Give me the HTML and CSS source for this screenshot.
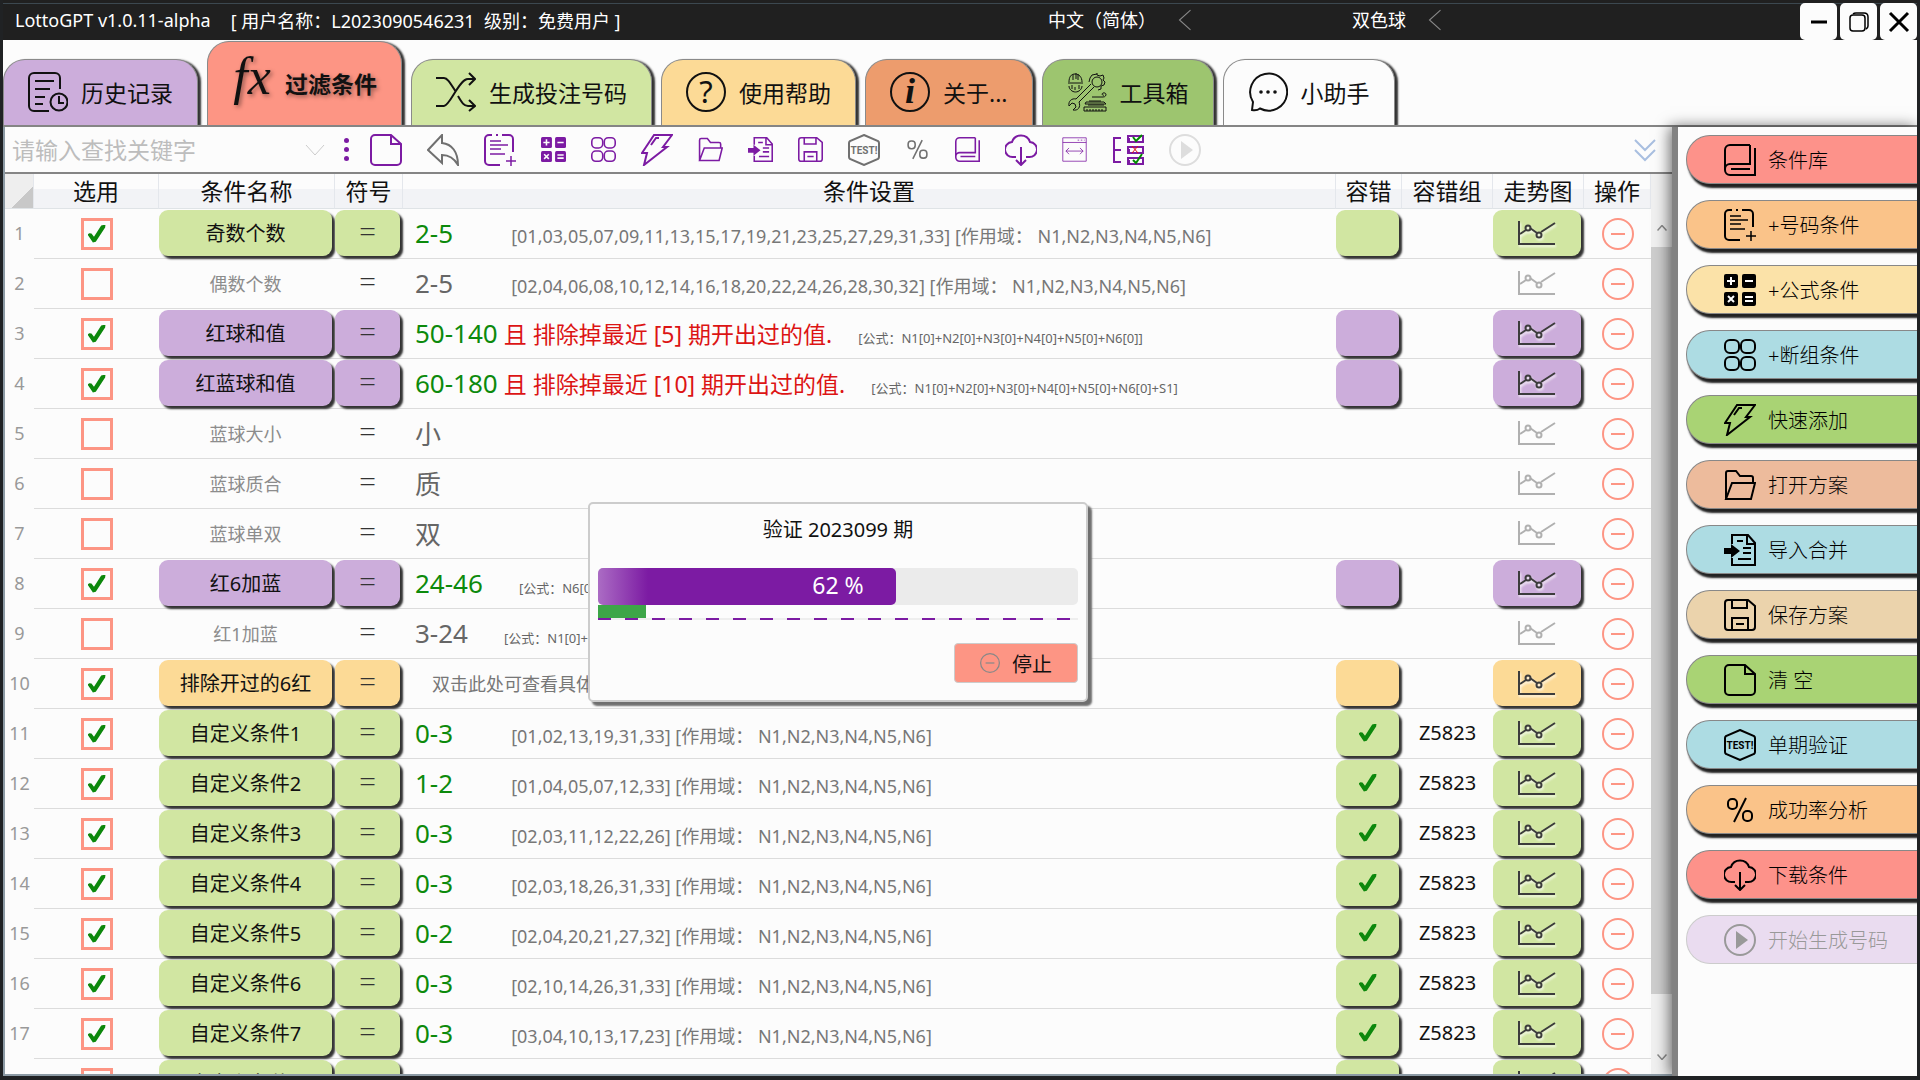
FILE: index.html
```
<!DOCTYPE html>
<html lang="zh-CN">

<head>
    <meta charset="UTF-8">
    <meta name="viewport" content="width=device-width, initial-scale=1.0">
    <title>LottoGPT</title>
    <link rel="stylesheet" href="styles.css">
</head>

<body>
    <svg class="sprite" aria-hidden="true">
        <symbol id="i-history" viewBox="0 0 40 40">
            <path d="M32 17V6a5 5 0 0 0-5-5H6a5 5 0 0 0-5 5v28a5 5 0 0 0 5 5h15M7 9h19M7 17h15M7 25h10M7 32h8" />
            <circle cx="31" cy="30" r="8.500" />
            <path d="M31 24v7h5" />
        </symbol>
        <symbol id="i-shuffle" viewBox="0 0 40 40">
            <path d="M0 6h8c3 0 5 3 12 14M0 34h8c6 0 15-27 24-27h6M22 24c4 7 6 10 10 10h6M33 1l6 6-6 6M33 28l6 6-6 5" />
        </symbol>
        <symbol id="i-chat" viewBox="0 0 40 40">
            <path d="M4 38l1-8A18.500 18.500 0 1 1 12 36.500C10 38 7 38.500 4 38z" />
            <g fill="currentColor" stroke="none"><circle cx="13" cy="20" r="1.800" /><circle cx="20" cy="20" r="1.800" /><circle cx="27" cy="20" r="1.800" /></g>
        </symbol>
        <symbol id="i-tools" viewBox="0 0 40 40">
            <path d="M1 11h15M2 10c0-5 2-8 6-8s7 3 7 8M6 8V2M9 7V1M11 8V2M2 14c0 3 3 6 6.500 6s6.500-3 6.500-6M5 13v4M12 13v4M8 15v3" />
            <circle cx="30" cy="10" r="5" />
            <path d="M30 1v2l3 1 3-1 1 3-1 2 2 2-1 3-3 1v3l-3 1M30 2l-5 1-2 3-1 4M27 15l-15 15M24 12L9 27M9 27c-4-1-8 2-7 7l3-3 3 1 1 3-3 3c5 1 8-3 6-8M25 25h11c4 0 4-5 0-4-2 1 0 3 1 2M19 30h18l2 2H18zM22 29h12M21 33h16M17 35h22v4H17zM20 39v-2M23 39v-2M26 39v-2M29 39v-2M32 39v-2M35 39v-2" />
        </symbol>
        <symbol id="i-doc" viewBox="0 0 32 32">
            <path d="M21 1H5a4 4 0 0 0-4 4v22a4 4 0 0 0 4 4h22a4 4 0 0 0 4-4V10zM21 1v9h10" />
        </symbol>
        <symbol id="i-back" viewBox="0 0 32 32">
            <path d="M15 1v8c10 1 16 9 16 22-4-7-9-10-16-10v8L1 16z" />
        </symbol>
        <symbol id="i-list" viewBox="0 0 32 32">
            <path d="M8 1H5a4 4 0 0 0-4 4v22a4 4 0 0 0 4 4h11M12 1h2M18 1h7a4 4 0 0 1 4 4v13" />
            <path d="M6 7h11M6 11h18M6 15h11M6 20h15M27 22v10M22 27h10" stroke-width="1.500" />
        </symbol>
        <symbol id="i-calc" viewBox="0 0 32 32">
            <g fill="currentColor" stroke="none">
                <rect width="14" height="14" rx="2" /><rect x="18" width="14" height="14" rx="2" />
                <rect y="18" width="14" height="14" rx="2" /><rect x="18" y="18" width="14" height="14" rx="2" />
            </g>
            <path class="hole" d="M7 3v8M3 7h8M21 7h8M4 22l6 6M10 22l-6 6M21 23h8M21 27h8" />
        </symbol>
        <symbol id="i-four" viewBox="0 0 32 32">
            <rect x="1" y="1" width="14" height="13" rx="5" /><rect x="17" y="1" width="14" height="13" rx="5" />
            <rect x="1" y="18" width="14" height="13" rx="5" /><rect x="17" y="18" width="14" height="13" rx="5" />
        </symbol>
        <symbol id="i-bolt" viewBox="0 0 32 32">
            <path d="M13 1h18L22 13h4L3 31l3-12H1zM10 11l5-7h3" />
        </symbol>
        <symbol id="i-folder" viewBox="0 0 32 32">
            <path d="M2 30V4a2 2 0 0 1 2-2h8l4 5h11a2 2 0 0 1 2 2v5M2 30l6-16h23l-4 16z" />
        </symbol>
        <symbol id="i-import" viewBox="0 0 32 32">
            <path d="M8 10V1h16l7 8v22H8v-7M23 1v9h8M13 7h6M19 14h8M19 19h8M14 25h13" />
            <path d="M0 14h7v-4l9 7-9 7v-4H0z" fill="currentColor" stroke="none" />
        </symbol>
        <symbol id="i-save" viewBox="0 0 32 32">
            <path d="M1 4a3 3 0 0 1 3-3h20l7 6v21a3 3 0 0 1-3 3H4a3 3 0 0 1-3-3zM8 1v8h15V1M8 31V19h16v12M12 25h8" />
        </symbol>
        <symbol id="i-test" viewBox="0 0 32 32">
            <path d="M16 1l14 6q1 1 1 2v14q0 1-1 2l-14 6-14-6q-1-1-1-2V9q0-1 1-2z" />
            <text x="16" y="20" text-anchor="middle" class="test-text">TEST!</text>
        </symbol>
        <symbol id="i-percent" viewBox="0 0 32 32">
            <rect x="4" y="5" width="9" height="10" rx="4" /><rect x="19" y="17" width="9" height="10" rx="4" />
            <path d="M22 4L10 28" />
        </symbol>
        <symbol id="i-book" viewBox="0 0 32 32">
            <path d="M26 1H6a5 5 0 0 0-5 5v20a5 5 0 0 0 5 5h25V4M26 1v19H6a5 5 0 0 0-5 5M7 25h19" />
        </symbol>
        <symbol id="i-cloud" viewBox="0 0 32 32">
            <path d="M11 23H8A7.500 7.500 0 0 1 7 8a9.500 9.500 0 0 1 18 0 7.500 7.500 0 0 1-1 15h-3M16 13v18M11 26l5 5 5-5" />
        </symbol>
        <symbol id="i-window" viewBox="0 0 32 32">
            <path d="M1 1h30v30H1zM1 7h30M20 4h2M24 4h2M28 4h1M5 18h22M9 14l-4 4 4 4M23 14l4 4-4 4" />
        </symbol>
        <symbol id="i-tree" viewBox="0 0 32 32">
            <path d="M9 4H2v24h7M2 16h7M16 2h15v6H16zM16 13h15v6H16zM16 24h15v6H16zM17 4v3M17 15v3M17 26v3" />
            <path d="M21 3l3 4 6-6M21 26l3 3 6-9" stroke="#008a00" />
            <path d="M20 12l6 7M26 12l-6 7" stroke="#e01010" stroke-width="1" />
        </symbol>
        <symbol id="i-play" viewBox="0 0 32 32">
            <circle cx="16" cy="16" r="15" />
            <path d="M12 7v18l12-9z" fill="currentColor" stroke="none" />
        </symbol>
        <symbol id="i-minus" viewBox="0 0 32 32">
            <circle cx="16" cy="16" r="15" />
            <path d="M9 16h14" />
        </symbol>
        <symbol id="i-trend" viewBox="0 0 40 26">
            <path d="M2 1v23h36M3 14l6-4M13 8l7 5M24 12L38 3" />
            <circle cx="11" cy="8" r="2.500" /><circle cx="22" cy="15" r="2.500" />
        </symbol>
        <symbol id="i-left" viewBox="0 0 12 20"><path d="M11 1L1 10l10 9" /></symbol>
        <symbol id="i-down" viewBox="0 0 20 12"><path d="M1 1l9 10 9-10" /></symbol>
    </svg>

    <header class="titlebar">
        <span class="app-name">LottoGPT v1.0.11-alpha</span>
        <span class="user">[ 用户名称：L2023090546231&nbsp; 级别：免费用户 ]</span>
        <div class="pickers">
            <div class="picker">
                <select aria-label="语言"><option>中文（简体）</option></select>
                <svg class="left"><use href="#i-left" /></svg>
            </div>
            <div class="picker">
                <select aria-label="彩种"><option>双色球</option></select>
                <svg class="left"><use href="#i-left" /></svg>
            </div>
        </div>
        <div class="win-buttons">
            <button aria-label="最小化"><svg viewBox="0 0 20 20"><path d="M2 10h16" stroke-width="3" /></svg></button>
            <button aria-label="还原"><svg viewBox="0 0 20 20"><rect x="1" y="3" width="15" height="16" rx="3" /><path d="M4 2q1-1 3-1h8q4 0 4 4v9q0 2-2 3" /></svg></button>
            <button aria-label="关闭"><svg viewBox="0 0 20 20"><path d="M1 1l18 18M19 1L1 19" stroke-width="3" /></svg></button>
        </div>
    </header>

    <nav class="tabs">
        <button class="tab purple"><svg><use href="#i-history" /></svg>历史记录</button>
        <button class="tab red active"><svg viewBox="0 0 40 40"><text x="20" y="31" text-anchor="middle" class="fx">fx</text></svg>过滤条件</button>
        <button class="tab green"><svg><use href="#i-shuffle" /></svg>生成投注号码</button>
        <button class="tab yellow"><svg viewBox="0 0 40 40"><circle cx="20" cy="20" r="19" /><text x="20" y="31" text-anchor="middle" class="mark">?</text></svg>使用帮助</button>
        <button class="tab orange"><svg viewBox="0 0 40 40"><circle cx="20" cy="20" r="19" /><text x="20" y="31" text-anchor="middle" class="info">i</text></svg>关于...</button>
        <button class="tab grass"><svg class="thin"><use href="#i-tools" /></svg>工具箱</button>
        <button class="tab"><svg><use href="#i-chat" /></svg>小助手</button>
    </nav>

    <div class="content">
        <main class="main">
            <div class="toolbar">
                <div class="search">
                    <input type="text" placeholder="请输入查找关键字" aria-label="查找关键字">
                    <button aria-label="展开"><svg class="down"><use href="#i-down" /></svg></button>
                </div>
                <div class="dots"><i></i><i></i><i></i></div>
                <div class="tools">
                    <button class="big" aria-label="清空"><svg><use href="#i-doc" /></svg></button>
                    <button class="big gray" aria-label="撤销"><svg><use href="#i-back" /></svg></button>
                    <button class="big" aria-label="号码条件"><svg><use href="#i-list" /></svg></button>
                    <button aria-label="公式条件"><svg><use href="#i-calc" /></svg></button>
                    <button aria-label="断组条件"><svg><use href="#i-four" /></svg></button>
                    <button class="big" aria-label="快速添加"><svg><use href="#i-bolt" /></svg></button>
                    <button aria-label="打开方案"><svg><use href="#i-folder" /></svg></button>
                    <button aria-label="导入合并"><svg><use href="#i-import" /></svg></button>
                    <button aria-label="保存方案"><svg><use href="#i-save" /></svg></button>
                    <button class="big gray" aria-label="单期验证"><svg><use href="#i-test" /></svg></button>
                    <button class="gray" aria-label="成功率分析"><svg><use href="#i-percent" /></svg></button>
                    <button aria-label="条件库"><svg><use href="#i-book" /></svg></button>
                    <button class="big" aria-label="下载条件"><svg><use href="#i-cloud" /></svg></button>
                    <button class="fine" aria-label="列宽"><svg><use href="#i-window" /></svg></button>
                    <button class="big" aria-label="选择"><svg><use href="#i-tree" /></svg></button>
                    <button class="big" aria-label="开始" disabled><svg><use href="#i-play" /></svg></button>
                </div>
                <button class="more" aria-label="更多"><svg viewBox="0 0 22 22"><path d="M1 1l10 10L21 1M1 11l10 10 10-10" /></svg></button>
            </div>

            <div class="grid">
                <table>
                    <colgroup>
                        <col class="c-no"><col class="c-use"><col class="c-name"><col class="c-sign"><col>
                        <col class="c-tol"><col class="c-group"><col class="c-trend"><col class="c-op">
                    </colgroup>
                    <thead>
                        <tr>
                            <th class="corner"></th>
                            <th>选用</th>
                            <th>条件名称</th>
                            <th>符号</th>
                            <th>条件设置</th>
                            <th>容错</th>
                            <th>容错组</th>
                            <th>走势图</th>
                            <th>操作</th>
                        </tr>
                    </thead>
                    <tbody id="rows"></tbody>
                </table>
                <div class="scrollbar">
                    <svg class="arrow up"><use href="#i-down" /></svg>
                    <div class="thumb"></div>
                    <svg class="arrow"><use href="#i-down" /></svg>
                </div>
            </div>
        </main>

        <aside class="side">
            <button class="pink"><svg><use href="#i-book" /></svg>条件库</button>
            <button class="apricot"><svg><use href="#i-list" /></svg>+号码条件</button>
            <button class="cream"><svg><use href="#i-calc" /></svg>+公式条件</button>
            <button class="blue"><svg><use href="#i-four" /></svg>+断组条件</button>
            <button class="lime"><svg><use href="#i-bolt" /></svg>快速添加</button>
            <button class="peach"><svg><use href="#i-folder" /></svg>打开方案</button>
            <button class="blue"><svg><use href="#i-import" /></svg>导入合并</button>
            <button class="sand"><svg><use href="#i-save" /></svg>保存方案</button>
            <button class="lime"><svg><use href="#i-doc" /></svg>清 空</button>
            <button class="blue"><svg><use href="#i-test" /></svg>单期验证</button>
            <button class="apricot"><svg><use href="#i-percent" /></svg>成功率分析</button>
            <button class="pink"><svg><use href="#i-cloud" /></svg>下载条件</button>
            <button class="lilac" disabled><svg><use href="#i-play" /></svg>开始生成号码</button>
        </aside>
    </div>

    <div class="dialog" role="dialog" aria-labelledby="dialog-title">
        <h2 id="dialog-title">验证 2023099 期</h2>
        <div class="progress" role="progressbar" aria-valuenow="62">
            <div class="bar" style="width: 62%"></div>
            <span>62 %</span>
        </div>
        <div class="step"><div class="step-bar" style="width: 10%"></div></div>
        <button class="stop"><svg><use href="#i-minus" /></svg>停止</button>
    </div>

    <script src="app.js"></script>
</body>

</html>
```

FILE: styles.css
```
* {
    margin: 0;
    padding: 0;
    box-sizing: border-box;
}

body {
    height: 100vh;
    display: flex;
    flex-direction: column;
    overflow: hidden;
    font-family: "Noto Sans", "Noto Sans CJK SC", sans-serif;
    background: #fcfcfc;
    color: #111;
    border: 3px solid #202224;
    border-top: none;
    border-bottom-width: 4px;
}

button,
input,
select {
    font: inherit;
    color: inherit;
    background: none;
    border: none;
    outline: none;
}

svg {
    display: block;
    flex: none;
    fill: none;
    stroke: currentColor;
    stroke-width: 2;
    overflow: visible;
}

.sprite {
    display: none;
}

/* title bar */
.titlebar {
    height: 40px;
    flex: none;
    display: flex;
    align-items: center;
    background: #202020;
    color: #fff;
    font-size: 18px;
    padding-left: 12px;
    box-shadow: inset 0 3px 0 #202020, inset 0 4px 0 #3c4850;
}

.user {
    margin-left: 20px;
}

.pickers {
    display: flex;
    margin-left: auto;
    gap: 160px;
}

.picker {
    display: flex;
    align-items: center;
    gap: 22px;
}

.picker select {
    appearance: none;
}

.left {
    width: 14px;
    height: 22px;
    color: #888;
}

.left,
.down {
    stroke-width: 1;
}

.win-buttons {
    display: flex;
    gap: 3px;
    margin-left: 358px;
    align-self: flex-end;
}

.win-buttons button {
    width: 37px;
    height: 37px;
    border-radius: 5px;
    background: #fcfcfc;
    color: #000;
    display: grid;
    place-items: center;
}

.win-buttons svg {
    width: 20px;
    height: 20px;
    stroke-width: 1.5;
}

/* tabs */
.tabs {
    display: flex;
    align-items: flex-end;
    gap: 9px;
    height: 87px;
    flex: none;
    border-bottom: 2px solid #858585;
}

.tab {
    display: flex;
    align-items: center;
    gap: 13px;
    height: 66px;
    padding: 0 24px 2px;
    font-size: 23px;
    color: #111;
    background: #fcfcfc;
    border: 1px solid #8a8a8a;
    border-bottom: none;
    border-radius: 22px 22px 0 0;
    box-shadow: 3px 1px 2px #333;
    clip-path: inset(-4px -8px 0 -4px);
}

.tab svg {
    width: 40px;
    height: 40px;
}

.tab .thin {
    stroke-width: 1;
}

.tab.active {
    height: 84px;
    font-weight: bold;
    text-shadow: 2px 2px 4px rgba(0, 0, 0, 0.4);
}

.tab text {
    fill: #111;
    stroke: none;
    font-family: "Liberation Serif", serif;
}

.tab .fx {
    font-size: 52px;
    font-style: italic;
    font-weight: normal;
}

.tab .mark {
    font-family: "Noto Sans", sans-serif;
    font-size: 31px;
}

.tab .info {
    font-size: 36px;
    font-style: italic;
    font-weight: bold;
}

.purple { background: #ccaddb; }
.red { background: #fd9584; }
.green { background: #d1e6a2; }
.yellow { background: #fcda96; }
.orange { background: #ed9c6d; }
.grass { background: #9dc56f; }

/* toolbar */
.content {
    flex: 1;
    min-height: 0;
    display: flex;
}

.main {
    flex: 1;
    min-width: 0;
    display: flex;
    flex-direction: column;
    border-left: 2px solid #8c9aa4;
    border-bottom: 2px solid #8c9aa4;
}

.toolbar {
    display: flex;
    align-items: center;
    height: 47px;
    flex: none;
    border-bottom: 2px solid #858585;
}

.search {
    display: flex;
    align-items: center;
    width: 320px;
}

.search input {
    flex: 1;
    min-width: 0;
    padding-left: 7px;
    font-size: 23px;
}

.search input::placeholder {
    color: #bdbdbd;
}

.down {
    width: 20px;
    height: 12px;
    color: #ccc;
}

.dots {
    display: grid;
    gap: 4px;
    margin: 0 21px 0 19px;
}

.dots i {
    width: 5px;
    height: 5px;
    border-radius: 50%;
    background: #7c1ba3;
}

.tools {
    display: flex;
    align-items: center;
    gap: 25px;
    color: #7c1ba3;
}

.tools svg {
    width: 25px;
    height: 25px;
}

.tools .big svg {
    width: 32px;
    height: 32px;
}

.tools .gray {
    color: #707070;
}

.tools .fine svg {
    stroke-width: 1;
}

.tools button:disabled {
    color: #ddd;
}

.hole {
    stroke: #fcfcfc;
}

.test-text {
    font: bold 10px Roboto, sans-serif;
    fill: currentColor;
    stroke: none;
}

.more {
    margin-left: auto;
    margin-right: 16px;
    color: #a9bfe0;
}

.more svg {
    width: 22px;
    height: 22px;
}

/* conditions table */
.grid {
    flex: 1;
    min-height: 0;
    display: flex;
    overflow: hidden;
}

table {
    flex: 1;
    align-self: flex-start;
    width: 100%;
    table-layout: fixed;
    border-collapse: separate;
    border-spacing: 0;
}

.c-no { width: 29px; }
.c-use { width: 125px; }
.c-name { width: 176px; }
.c-sign { width: 68px; }
.c-tol { width: 66px; }
.c-group { width: 91px; }
.c-trend { width: 91px; }
.c-op { width: 67px; }

th {
    height: 35px;
    font-size: 23px;
    line-height: 34px;
    font-weight: normal;
    background: linear-gradient(#fcfcfc 15px, #f2f3f6 15px);
    border-right: 1px solid #e4e7ec;
    border-bottom: 1px solid #dfe3e6;
}

.corner {
    background: linear-gradient(135deg, #eee 66%, #c8c8c8 66%);
}

td {
    height: 50px;
    padding: 0 0 2px;
    text-align: center;
    vertical-align: middle;
    border-bottom: 1px solid #dcdcdc;
}

td.no {
    font-size: 18px;
    color: #999;
    border-bottom: none;
}

input[type="checkbox"] {
    appearance: none;
    display: grid;
    place-items: center;
    width: 32px;
    height: 32px;
    margin: 2px auto 0;
    border: 3px solid #fd9584;
}

/* hand-drawn tick shared by the checkboxes and the tolerance buttons */
input[type="checkbox"]:checked::before,
.tick {
    content: "";
    display: block;
    width: 18px;
    height: 18px;
    background: #0c880c;
    clip-path: polygon(0 56%, 10% 48%, 22% 50%, 36% 68%, 76% 6%, 100% 0, 98% 16%, 46% 96%, 30% 100%);
}

.cell {
    display: flex;
    align-items: center;
    justify-content: center;
    width: calc(100% - 3px);
    height: 46px;
    border-radius: 9px;
    font-size: 18px;
    color: #8c8c8c;
}

.cell.tone {
    font-size: 20px;
    color: #111;
    box-shadow: 3px 3px 2px #333;
}

.cell.sign {
    padding-bottom: 4px;
    font-size: 30px;
    font-weight: 300;
    color: #333;
}

.cell svg {
    width: 40px;
    height: 26px;
    color: #b0b0b0;
}

.cell.tone svg {
    color: #3c3c3c;
    filter: drop-shadow(1px 2px 1px rgba(255, 255, 255, 0.8));
}

.setting {
    display: flex;
    align-items: baseline;
    padding-left: 12px;
    white-space: nowrap;
    overflow: hidden;
}

.value {
    font-size: 26px;
    color: #666;
}

.on .value {
    color: #0c8a0c;
}

.exclude {
    margin-left: 6px;
    font-size: 23px;
    color: #dc1414;
}

.numbers {
    margin-left: 58px;
    font-size: 18px;
    color: #777;
}

.formula {
    margin-left: 36px;
    font-size: 13px;
    color: #666;
}

.exclude + .formula {
    margin-left: 26px;
}

.hint {
    margin-left: 17px;
    font-size: 18px;
    color: #777;
}

.group {
    font-size: 20px;
}

.remove {
    display: block;
    margin: 2px auto 0;
    color: #fd9584;
}

.remove svg {
    width: 32px;
    height: 32px;
}

.scrollbar {
    width: 21px;
    flex: none;
    display: flex;
    flex-direction: column;
    align-items: center;
    gap: 16px;
    padding: 51px 0 14px;
    background: #f0f0f0;
}

.thumb {
    flex: 1;
    width: 100%;
    margin-bottom: 44px;
    background: #cdcdcd;
}

.arrow {
    width: 10px;
    height: 6px;
    color: #888;
    stroke-width: 3;
}

.arrow.up {
    transform: rotate(180deg);
}

/* side buttons */
.side {
    position: relative;
    width: 245px;
    display: flex;
    flex-direction: column;
    gap: 16px;
    padding: 8px 0 0 8px;
    background: #fcfcfc;
    border-left: 6px solid #828282;
    box-shadow: -2px 0 14px rgba(0, 0, 0, 0.6);
}

.side button {
    display: flex;
    align-items: center;
    gap: 12px;
    height: 49px;
    padding-left: 37px;
    font-size: 20px;
    font-weight: 300;
    color: #000;
    border: 1px solid #888;
    border-right: none;
    border-radius: 24px 0 0 24px;
    box-shadow: 2px 4px 2px #222;
}

.side svg {
    width: 32px;
    height: 32px;
}

.side .pink { background: #fd928a; }
.side .apricot { background: #fac389; }
.side .cream { background: #fbe2a8; }
.side .blue { background: #addce3; }
.side .lime { background: #a9d374; }
.side .peach { background: #edbb9c; }
.side .sand { background: #ebd3ac; }

.side .lilac {
    background: #eadcf0;
    color: #999;
    border-color: #ccc;
    box-shadow: none;
}

/* progress dialog */
.dialog {
    position: absolute;
    top: 502px;
    left: 588px;
    width: 500px;
    padding: 11px 8px 17px;
    display: flex;
    flex-direction: column;
    background: #fcfcfc;
    border: 2px solid #ccc;
    border-radius: 5px;
    box-shadow: 4px 4px 2px #6e6e6e;
}

.dialog h2 {
    font-size: 20px;
    line-height: 30px;
    font-weight: normal;
    text-align: center;
}

.progress {
    display: grid;
    height: 37px;
    margin-top: 23px;
    background: #ebebeb;
    border-radius: 5px;
}

.progress > * {
    grid-area: 1 / 1;
}

.bar {
    border-radius: 5px;
    background: linear-gradient(to right, #ab6cc4, #7c1ba3 50px);
}

.progress span {
    place-self: center;
    font-size: 23px;
    line-height: 34px;
    padding-bottom: 3px;
    color: #fff;
}

.step {
    height: 15px;
    background: repeating-linear-gradient(to right, #7c1ba3 0 13px, #eee 13px 27px) bottom / 100% 2px no-repeat;
}

.step-bar {
    height: 13px;
    background: #3da648;
}

.stop {
    align-self: flex-end;
    display: flex;
    align-items: center;
    justify-content: center;
    gap: 12px;
    width: 124px;
    height: 40px;
    margin-top: 23px;
    font-size: 20px;
    background: #fd9584;
    border: 1px solid #ccc;
    border-radius: 4px;
}

.stop svg {
    width: 20px;
    height: 20px;
    color: #888;
}
```

FILE: app.js
```
const scope = " [作用域： N1,N2,N3,N4,N5,N6]";

const rows = [
    { name: "奇数个数", tone: "green", value: "2-5", numbers: "[01,03,05,07,09,11,13,15,17,19,21,23,25,27,29,31,33]" },
    { name: "偶数个数", value: "2-5", numbers: "[02,04,06,08,10,12,14,16,18,20,22,24,26,28,30,32]" },
    { name: "红球和值", tone: "purple", value: "50-140", exclude: "且 排除掉最近 [5] 期开出过的值.", formula: "N1[0]+N2[0]+N3[0]+N4[0]+N5[0]+N6[0]]" },
    { name: "红蓝球和值", tone: "purple", value: "60-180", exclude: "且 排除掉最近 [10] 期开出过的值.", formula: "N1[0]+N2[0]+N3[0]+N4[0]+N5[0]+N6[0]+S1]" },
    { name: "蓝球大小", value: "小" },
    { name: "蓝球质合", value: "质" },
    { name: "蓝球单双", value: "双" },
    { name: "红6加蓝", tone: "purple", value: "24-46", formula: "N6[0]+S1]" },
    { name: "红1加蓝", value: "3-24", formula: "N1[0]+S1]" },
    { name: "排除开过的6红", tone: "yellow", hint: "双击此处可查看具体内容" },
    { name: "自定义条件1", tone: "green", value: "0-3", numbers: "[01,02,13,19,31,33]", group: "Z5823" },
    { name: "自定义条件2", tone: "green", value: "1-2", numbers: "[01,04,05,07,12,33]", group: "Z5823" },
    { name: "自定义条件3", tone: "green", value: "0-3", numbers: "[02,03,11,12,22,26]", group: "Z5823" },
    { name: "自定义条件4", tone: "green", value: "0-3", numbers: "[02,03,18,26,31,33]", group: "Z5823" },
    { name: "自定义条件5", tone: "green", value: "0-2", numbers: "[02,04,20,21,27,32]", group: "Z5823" },
    { name: "自定义条件6", tone: "green", value: "0-3", numbers: "[02,10,14,26,31,33]", group: "Z5823" },
    { name: "自定义条件7", tone: "green", value: "0-3", numbers: "[03,04,10,13,17,23]", group: "Z5823" },
    { name: "自定义条件8", tone: "green", value: "1-3", numbers: "[03,05,11,16,20,28]", group: "Z5823" }
];

let html = "";
rows.forEach(function (row, i) {
    const tone = row.tone ? "tone " + row.tone : "";
    let setting = "";
    if (row.value) setting += `<span class="value">${row.value}</span>`;
    if (row.exclude) setting += `<span class="exclude">${row.exclude}</span>`;
    if (row.numbers) setting += `<span class="numbers">${row.numbers}${scope}</span>`;
    if (row.formula) setting += `<span class="formula">[公式：${row.formula}</span>`;
    if (row.hint) setting += `<span class="hint">${row.hint}</span>`;

    html += `
        <tr class="${row.tone ? "on" : ""}">
            <td class="no">${i + 1}</td>
            <td><input type="checkbox" aria-label="${row.name}" ${row.tone ? "checked" : ""}></td>
            <td><button class="cell ${tone}">${row.name}</button></td>
            <td><button class="cell sign ${tone}">=</button></td>
            <td><div class="setting">${setting}</div></td>
            <td>${row.tone ? `<button class="cell ${tone}" aria-label="容错">${row.group ? '<span class="tick"></span>' : ""}</button>` : ""}</td>
            <td class="group">${row.group || ""}</td>
            <td><button class="cell ${tone}" aria-label="走势图"><svg><use href="#i-trend" /></svg></button></td>
            <td><button class="remove" aria-label="删除"><svg><use href="#i-minus" /></svg></button></td>
        </tr>`;
});
document.querySelector("#rows").innerHTML = html;
```
